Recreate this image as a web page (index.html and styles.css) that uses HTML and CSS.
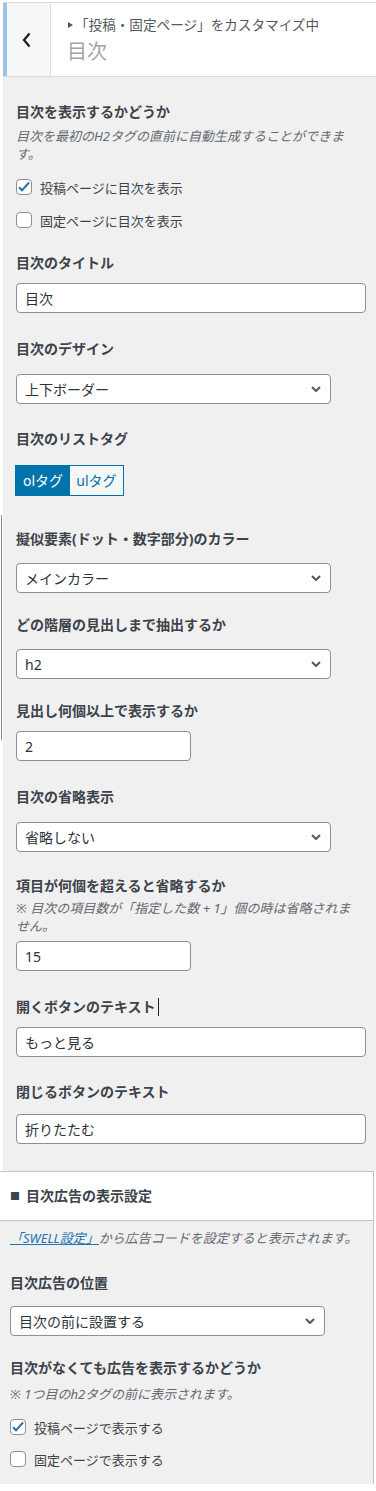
FILE: index.html
```html
<!DOCTYPE html>
<html lang="ja">
<head>
<meta charset="utf-8">
<title>目次 - カスタマイズ</title>
<link rel="stylesheet" href="styles.css">
</head>
<body>
<div class="top">
  <div class="gutter"><div class="gutter-mark"></div></div>
  <div class="panel">
    <header class="head">
      <div class="back">
        <svg width="10" height="16" viewBox="0 0 10 16"><polyline points="7.5,1.5 2,8 7.5,14.5" fill="none" stroke="#1d2327" stroke-width="2.3"/></svg>
      </div>
      <div class="head-text">
        <div class="action"><span class="tri"></span>「投稿・固定ページ」をカスタマイズ中</div>
        <h3 class="sec-title">目次</h3>
      </div>
    </header>

    <div class="controls">
      <div class="field">
        <div class="label">目次を表示するかどうか</div>
        <p class="desc d-first">目次を最初のH2タグの直前に自動生成することができます。</p>
        <div class="check c-first"><span class="box"><svg width="14" height="14" viewBox="0 0 14 14"><path d="M2 7.3 L5 10.3 L12 2.5" fill="none" stroke="#2271b1" stroke-width="2"/></svg></span>投稿ページに目次を表示</div>
        <div class="check c-next"><span class="box"></span>固定ページに目次を表示</div>
      </div>

      <div class="field g23">
        <div class="label">目次のタイトル</div>
        <input class="input" type="text" value="目次">
      </div>

      <div class="field g26">
        <div class="label">目次のデザイン</div>
        <div class="select"><span>上下ボーダー</span><svg class="chev" width="10" height="6" viewBox="0 0 10 6"><path d="M1 1 L5 5 L9 1" fill="none" stroke="#50575e" stroke-width="2"/></svg></div>
      </div>

      <div class="field g25">
        <div class="label">目次のリストタグ</div>
        <div class="seg"><span class="seg-btn on">olタグ</span><span class="seg-btn off">ulタグ</span></div>
      </div>

      <div class="field g33">
        <div class="label">擬似要素(ドット・数字部分)のカラー</div>
        <div class="select s14"><span>メインカラー</span><svg class="chev" width="10" height="6" viewBox="0 0 10 6"><path d="M1 1 L5 5 L9 1" fill="none" stroke="#50575e" stroke-width="2"/></svg></div>
      </div>

      <div class="field g22">
        <div class="label">どの階層の見出しまで抽出するか</div>
        <div class="select s14"><span>h2</span><svg class="chev" width="10" height="6" viewBox="0 0 10 6"><path d="M1 1 L5 5 L9 1" fill="none" stroke="#50575e" stroke-width="2"/></svg></div>
      </div>

      <div class="field g22">
        <div class="label">見出し何個以上で表示するか</div>
        <input class="input num" type="text" value="2">
      </div>

      <div class="field g26">
        <div class="label">目次の省略表示</div>
        <div class="select"><span>省略しない</span><svg class="chev" width="10" height="6" viewBox="0 0 10 6"><path d="M1 1 L5 5 L9 1" fill="none" stroke="#50575e" stroke-width="2"/></svg></div>
      </div>

      <div class="field g24">
        <div class="label">項目が何個を超えると省略するか</div>
        <p class="desc d-tight">※ 目次の項目数が「指定した数 + 1」個の時は省略されません。</p>
        <input class="input num i-tight" type="text" value="15">
      </div>

      <div class="field g26">
        <div class="label">開くボタンのテキスト<span class="caret"></span></div>
        <input class="input" type="text" value="もっと見る">
      </div>

      <div class="field g25">
        <div class="label">閉じるボタンのテキスト</div>
        <input class="input i-low" type="text" value="折りたたむ">
      </div>
    </div>
  </div>
</div>

<div class="bottom">
  <div class="sec-head"><span class="sq">■</span>目次広告の表示設定</div>
  <div class="sec-body">
    <p class="desc"><a class="link" href="#">「SWELL設定」</a>から広告コードを設定すると表示されます。</p>

    <div class="field g26">
      <div class="label">目次広告の位置</div>
      <div class="select s13"><span>目次の前に設置する</span><svg class="chev" width="10" height="6" viewBox="0 0 10 6"><path d="M1 1 L5 5 L9 1" fill="none" stroke="#50575e" stroke-width="2"/></svg></div>
    </div>

    <div class="field g22">
      <div class="label">目次がなくても広告を表示するかどうか</div>
      <p class="desc d-ad">※ 1つ目のh2タグの前に表示されます。</p>
      <div class="check c-first"><span class="box"><svg width="14" height="14" viewBox="0 0 14 14"><path d="M2 7.3 L5 10.3 L12 2.5" fill="none" stroke="#2271b1" stroke-width="2"/></svg></span>投稿ページで表示する</div>
      <div class="check c-last"><span class="box"></span>固定ページで表示する</div>
    </div>
  </div>
</div>
</body>
</html>
```

FILE: styles.css
```css
* { box-sizing: border-box; }

body {
  margin: 0;
  background: #fff;
  font-family: "Noto Sans", "Noto Sans CJK JP", sans-serif;
  color: #3c434a;
}

.top { display: flex; }

.gutter { width: 3px; flex: none; }
.gutter-mark {
  margin: 515px 0 0 1px;
  width: 1px;
  height: 225px;
  background: #8c8f94;
}

.panel { flex: 1; min-width: 0; }

.head {
  margin-top: 2px;
  height: 75px;
  border-top: 1px solid #dcdcde;
  border-bottom: 1px solid #dcdcde;
  background: #fff;
  display: flex;
}

.back {
  width: 48px;
  flex: none;
  border-left: 4px solid #9ec2e6;
  border-right: 1px solid #dcdcde;
  background: #f6f7f7;
  display: flex;
  align-items: center;
  justify-content: center;
  padding-right: 3px;
}

.head-text { padding: 13px 0 0 16px; }

.action {
  display: flex;
  align-items: center;
  font-size: 13.6px;
  line-height: 18px;
  color: #50575e;
  white-space: nowrap;
}

.tri {
  width: 0;
  height: 0;
  border-left: 5px solid #50575e;
  border-top: 3.5px solid transparent;
  border-bottom: 3.5px solid transparent;
  margin: 0 2px 0 1px;
}

.sec-title {
  margin: 5px 0 0;
  font-size: 20px;
  line-height: 26px;
  font-weight: normal;
  color: #a0a5aa;
}

.controls {
  background: #f0f0f1;
  padding: 25px 10px 27px 13px;
}

.g22 { margin-top: 22px; }
.g23 { margin-top: 23px; }
.g24 { margin-top: 24px; }
.g25 { margin-top: 25px; }
.g26 { margin-top: 26px; }
.g33 { margin-top: 33px; }

.label {
  font-size: 14px;
  font-weight: 700;
  line-height: 20px;
  color: #3c434a;
}

.caret {
  display: inline-block;
  width: 1px;
  height: 18px;
  margin-left: 2px;
  vertical-align: -4px;
  background: #1d2327;
}

.desc {
  margin: 0;
  font-size: 13px;
  line-height: 18px;
  font-style: italic;
  color: #646970;
}
.d-first { margin-top: 5px; }
.d-tight { margin-top: 3px; max-width: 336px; }
.d-ad { margin-top: 7px; }

.link { color: #2271b1; text-decoration: underline; }

.check {
  display: flex;
  align-items: center;
  height: 20px;
  font-size: 13px;
  color: #3c434a;
}
.c-first { margin-top: 14px; }
.c-next { margin-top: 13px; }
.c-last { margin-top: 12px; }

.box {
  width: 16px;
  height: 16px;
  flex: none;
  margin-right: 8px;
  border: 1px solid #8c8f94;
  border-radius: 4px;
  background: #fff;
  display: flex;
  align-items: center;
  justify-content: center;
}

.input {
  display: block;
  width: 100%;
  height: 30px;
  margin: 10px 0 0;
  padding: 0 8px;
  border: 1px solid #8c8f94;
  border-radius: 4px;
  background: #fff;
  font: 14px "Noto Sans", "Noto Sans CJK JP", sans-serif;
  color: #2c3338;
}
.input.num { width: 175px; }
.i-tight { margin-top: 6px; }
.i-low { margin-top: 12px; }

.select {
  display: flex;
  align-items: center;
  justify-content: space-between;
  width: 315px;
  height: 30px;
  margin-top: 15px;
  padding: 0 9px 0 8px;
  border: 1px solid #8c8f94;
  border-radius: 4px;
  background: #fff;
  font-size: 14px;
  color: #2c3338;
}
.s14 { margin-top: 14px; }
.s13 { margin-top: 13px; }

.seg {
  display: flex;
  width: max-content;
  margin: 16px 0 0 -1px;
  border: 1px solid #0073aa;
}
.seg-btn {
  height: 29px;
  line-height: 29px;
  font-size: 14px;
  text-align: center;
}
.seg-btn.on { width: 54px; background: #0073aa; color: #fff; }
.seg-btn.off { width: 53px; background: #f6f7f7; color: #0073aa; }

.bottom {
  width: 374px;
  border-right: 1px solid #c3c4c7;
  background: #f0f0f1;
}

.sec-head {
  display: flex;
  align-items: center;
  padding: 14px 10px;
  border-top: 1px solid #c3c4c7;
  border-bottom: 1px solid #c3c4c7;
  background: #fff;
  font-size: 14px;
  font-weight: 700;
  line-height: 20px;
  color: #3c434a;
}
.sq {
  font-size: 10px;
  width: 10px;
  margin-right: 6px;
  color: #3c434a;
}

.sec-body { padding: 8px 10px 15px; }
```
